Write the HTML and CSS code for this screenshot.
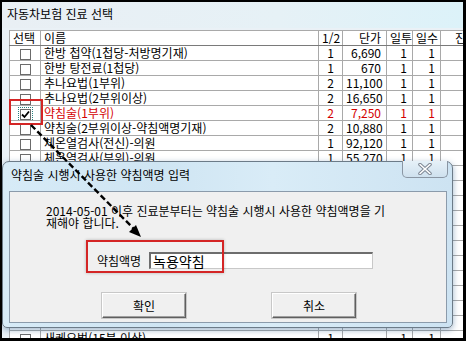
FILE: index.html
```html
<!DOCTYPE html>
<html lang="ko">
<head>
    <meta charset="UTF-8">
    <title>자동차보험 진료 선택</title>
    <link rel="stylesheet" href="styles.css">
</head>
<body>

    <div class="screen">
        <div class="win">
            <div class="win-title">자동차보험 진료 선택</div>
            <div class="win-body">
                <table class="grid">
                    <colgroup>
                        <col class="c-sel"><col class="c-name"><col class="c-half"><col class="c-price"><col class="c-dose"><col class="c-days"><col class="c-more">
                    </colgroup>
                    <tr class="head">
                        <td>선택</td><td>이름</td><td class="ctr">1/2</td><td class="num">단가</td><td class="ctr">일투</td><td class="ctr">일수</td><td class="ctr">진</td>
                    </tr>
                    <tr><td class="ctr"><span class="cb"></span></td><td>한방 첩약(1첩당-처방명기재)</td><td class="ctr">1</td><td class="num">6,690</td><td class="num">1</td><td class="num">1</td><td></td></tr>
                    <tr><td class="ctr"><span class="cb"></span></td><td>한방 탕전료(1첩당)</td><td class="ctr">1</td><td class="num">670</td><td class="num">1</td><td class="num">1</td><td></td></tr>
                    <tr><td class="ctr"><span class="cb"></span></td><td>추나요법(1부위)</td><td class="ctr">2</td><td class="num">11,100</td><td class="num">1</td><td class="num">1</td><td></td></tr>
                    <tr><td class="ctr"><span class="cb"></span></td><td>추나요법(2부위이상)</td><td class="ctr">2</td><td class="num">16,650</td><td class="num">1</td><td class="num">1</td><td></td></tr>
                    <tr class="picked"><td class="ctr"><span class="cb on"><svg width="9" height="9" viewBox="0 0 9 9"><path d="M1 4.5 L3.5 7 L8 1.5" fill="none" stroke="#000" stroke-width="1.8"/></svg></span></td><td>약침술(1부위)</td><td class="ctr">2</td><td class="num">7,250</td><td class="num">1</td><td class="num">1</td><td></td></tr>
                    <tr><td class="ctr"><span class="cb"></span></td><td>약침술(2부위이상-약침액명기재)</td><td class="ctr">2</td><td class="num">10,880</td><td class="num">1</td><td class="num">1</td><td></td></tr>
                    <tr><td class="ctr"><span class="cb"></span></td><td>체온열검사(전신)-의원</td><td class="ctr">1</td><td class="num">92,120</td><td class="num">1</td><td class="num">1</td><td></td></tr>
                    <tr><td class="ctr"><span class="cb"></span></td><td>체온열검사(부위)-의원</td><td class="ctr">1</td><td class="num">55,270</td><td class="num">1</td><td class="num">1</td><td></td></tr>
                    <tr><td></td><td></td><td></td><td></td><td></td><td></td><td></td></tr>
                    <tr><td></td><td></td><td></td><td></td><td></td><td></td><td></td></tr>
                    <tr><td></td><td></td><td></td><td></td><td></td><td></td><td></td></tr>
                    <tr><td></td><td></td><td></td><td></td><td></td><td></td><td></td></tr>
                    <tr><td></td><td></td><td></td><td></td><td></td><td></td><td></td></tr>
                    <tr><td></td><td></td><td></td><td></td><td></td><td></td><td></td></tr>
                    <tr><td></td><td></td><td></td><td></td><td></td><td></td><td></td></tr>
                    <tr><td></td><td></td><td></td><td></td><td></td><td></td><td></td></tr>
                    <tr><td></td><td></td><td></td><td></td><td></td><td></td><td></td></tr>
                    <tr><td></td><td></td><td></td><td></td><td></td><td></td><td></td></tr>
                    <tr><td></td><td></td><td></td><td></td><td></td><td></td><td></td></tr>
                    <tr><td class="ctr"><span class="cb"></span></td><td>새케요법(15분 이상)</td><td class="ctr">1</td><td class="num"></td><td class="num">1</td><td class="num">1</td><td></td></tr>
                </table>
            </div>
        </div>

        <!-- 약침액명 입력 창 -->
        <div class="dlg">
            <div class="dlg-title">약침술 시행시 사용한 약침액명 입력</div>
            <div class="dlg-close">
                <svg width="16" height="12" viewBox="0 0 16 12"><path d="M3 1.5 L13 10.5 M13 1.5 L3 10.5" stroke="#7d8794" stroke-width="3.6" stroke-linecap="round"/><path d="M3 1.5 L13 10.5 M13 1.5 L3 10.5" stroke="#fff" stroke-width="1.6" stroke-linecap="round"/></svg>
            </div>
            <div class="dlg-body">
                <p class="msg">2014-05-01 이후 진료분부터는 약침술 시행시 사용한 약침액명을 기<br>재해야 합니다.</p>
                <div class="field">
                    <span class="field-label">약침액명</span>
                    <div class="field-input">녹용약침</div>
                </div>
                <div class="btns">
                    <button class="btn">확인</button>
                    <button class="btn">취소</button>
                </div>
            </div>
        </div>

        <div class="mark mark-check"></div>
        <div class="mark mark-field"></div>

        <svg class="arrow" width="461" height="336" viewBox="0 0 461 336">
            <line x1="29" y1="123" x2="133" y2="228" stroke="#000" stroke-width="2.4" stroke-dasharray="6 3"/>
            <polygon points="139,235 127,230 134,223" fill="#000"/>
        </svg>
    </div>

</body>
</html>
```

FILE: styles.css
```css
body {
    margin: 0;
    background: #000;
    font-family: "Noto Sans CJK KR", "Noto Sans", sans-serif;
    font-size: 12px;
    color: #000;
}

.screen {
    position: relative;
    width: 466px;
    height: 341px;
    box-sizing: border-box;
    border-style: solid;
    border-color: #000;
    border-width: 2px 3px 3px 2px;
    overflow: hidden;
    background: #000;
}

.win {
    height: 100%;
    background: #eaf1f6;
}

.win-title {
    height: 26px;
    line-height: 24px;
    padding-left: 5px;
    font-size: 12px;
    background: linear-gradient(to right, #e9eff4 0%, #e6f1f6 60%, #dcf2f9 100%);
}

.win-body {
    padding: 2px 0 0 7px;
    overflow: hidden;
}

.grid {
    border-collapse: collapse;
    table-layout: fixed;
    width: 471px;
    background: #fff;
}

.c-sel { width: 31px; }
.c-name { width: 278px; }
.c-half { width: 24px; }
.c-price { width: 44px; }
.c-dose { width: 26px; }
.c-days { width: 28px; }
.c-more { width: 40px; }

.grid td {
    height: 14px;
    padding: 0 3px;
    border: 1px solid #a9a9a9;
    line-height: 14px;
    white-space: nowrap;
    overflow: hidden;
}

.grid .head td {
    border-bottom-color: #7a7a7a;
}

.grid .ctr { text-align: center; }
.grid .num { text-align: right; padding-right: 5px; }

.grid .picked td {
    color: #d40000;
}

.cb {
    display: inline-block;
    width: 11px;
    height: 11px;
    box-sizing: border-box;
    border: 1px solid #6b6b6b;
    background: #fff;
    vertical-align: -2px;
}

.cb.on {
    outline: 1px dotted #2a7f7f;
    outline-offset: 1px;
}

.cb svg {
    display: block;
    margin: 0;
}

/* 대화상자 */
.dlg {
    position: absolute;
    left: 0;
    top: 159px;
    width: 451px;
    height: 167px;
    box-sizing: border-box;
    padding: 0 5px 6px 6px;
    border: 1px solid #6c7b88;
    border-radius: 7px 7px 5px 5px;
    background: linear-gradient(to right, #d7ebf7 0%, #cfe5f3 35%, #d9ecf7 60%, #cde3f2 100%);
    box-shadow: 0 2px 6px rgba(40, 90, 140, 0.45);
}

.dlg-title {
    height: 29px;
    line-height: 26px;
    padding-left: 2px;
    font-size: 12px;
}

.dlg-close {
    position: absolute;
    top: -1px;
    right: 4px;
    width: 46px;
    height: 17px;
    box-sizing: border-box;
    border: 1px solid #8a96a3;
    border-top: none;
    border-radius: 0 0 5px 5px;
    background: linear-gradient(#e6f1f8, #cfe1ee);
    display: flex;
    align-items: center;
    justify-content: center;
}

.dlg-body {
    height: 132px;
    box-sizing: border-box;
    border: 1px solid #8b9bab;
    background: #f0f0f0;
    padding: 13px 0 0 36px;
}

.msg {
    margin: 0;
    line-height: 12px;
    font-size: 12px;
}

.field {
    display: flex;
    align-items: center;
    margin: 23px 0 0 51px;
}

.field-label {
    width: 48px;
    margin-right: 4px;
}

.field-input {
    width: 224px;
    height: 17px;
    box-sizing: border-box;
    border: 1px solid #c8c8c8;
    border-top: 2px solid #6d6d6d;
    border-left: 2px solid #6d6d6d;
    background: #fff;
    padding-left: 2px;
    font-size: 14px;
    line-height: 14px;
}

.btns {
    display: flex;
    gap: 86px;
    margin: 24px 0 0 56px;
}

.btn {
    width: 84px;
    height: 25px;
    padding: 0;
    background: #f0f0f0;
    border: 1px solid;
    border-color: #ffffff #5f5f5f #5f5f5f #ffffff;
    box-shadow: inset -1px -1px 0 #a0a0a0, 0 0 0 1px #c8c8c8;
    font-family: "Noto Sans CJK KR", sans-serif;
    font-size: 12px;
    color: #000;
}

/* 표시 */
.mark {
    position: absolute;
    box-sizing: border-box;
    border: 2px solid #d42525;
}

.mark-check {
    left: 7px;
    top: 97px;
    width: 34px;
    height: 26px;
}

.mark-field {
    left: 84px;
    top: 238px;
    width: 138px;
    height: 33px;
    box-shadow: 0 0 3px rgba(0, 0, 0, 0.25);
}

.arrow {
    position: absolute;
    left: 0;
    top: 0;
}
```
